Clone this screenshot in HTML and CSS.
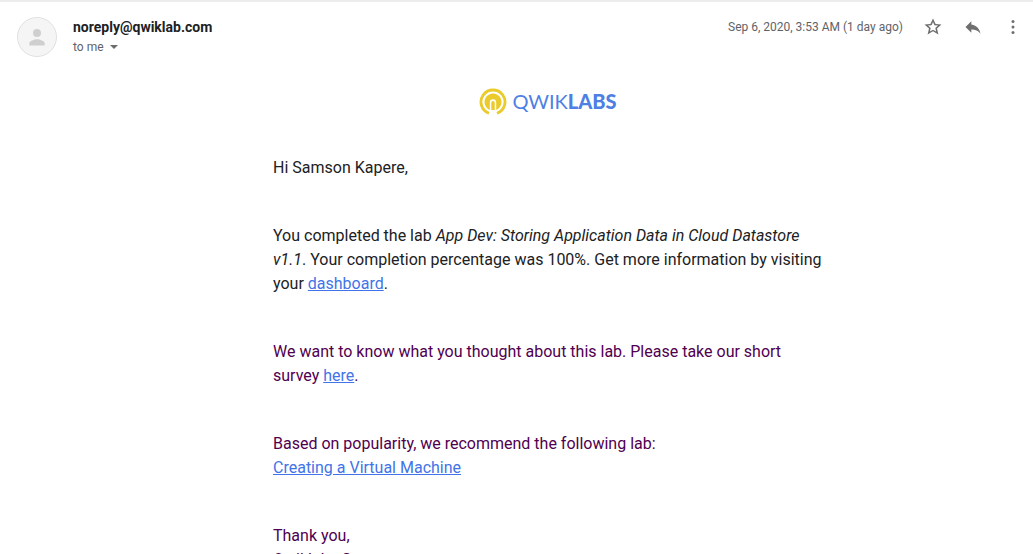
FILE: index.html
```html
<!DOCTYPE html>
<html lang="en">
<head>
<meta charset="utf-8">
<meta name="viewport" content="width=device-width, initial-scale=1">
<title>Lab completed</title>
<link rel="stylesheet" href="styles.css">
</head>
<body>
<article class="message">
  <header class="message-header">
    <svg class="avatar" viewBox="0 0 40 40" aria-hidden="true">
      <circle cx="20" cy="20" r="19.5" fill="#f5f5f5" stroke="#e0e0e0"/>
      <circle cx="20" cy="16" r="4" fill="#cfcfcf"/>
      <path d="M12.3 28.5v-2c0-2.700 5-4.300 7.700-4.300s7.700 1.600 7.700 4.300v2z" fill="#cfcfcf"/>
    </svg>
    <div class="sender">
      <h1 class="sender-name">noreply@qwiklab.com</h1>
      <button class="recipient" type="button">to me
        <svg class="caret" viewBox="0 0 8 4" aria-hidden="true"><path d="M0 0h8L4 4z" fill="#6b6b6b"/></svg>
      </button>
    </div>
    <div class="actions">
      <time class="date" datetime="2020-09-06T03:53">Sep 6, 2020, 3:53 AM (1 day ago)</time>
      <button class="icon-button" type="button" aria-label="Star">
        <svg viewBox="0 0 20 20"><path d="M18.500 7.600l-5.900-.5L10 1.500 7.400 7.100l-5.900.5 4.500 3.900L4.600 17.500 10 14.300l5.400 3.200-1.400-6zM10 12.700l-3.100 1.900.8-3.600-2.700-2.400 3.600-.3L10 5l1.400 3.300 3.600.3-2.700 2.400.8 3.600z"/></svg>
      </button>
      <button class="icon-button" type="button" aria-label="Reply">
        <svg viewBox="0 0 24 24"><path d="M10 9V5l-7 7 7 7v-4.100c5 0 8.500 1.600 11 5.100-1-5-4-10-11-11z"/></svg>
      </button>
      <button class="icon-button" type="button" aria-label="More">
        <svg viewBox="0 0 20 20"><circle cx="10" cy="4.500" r="1.500"/><circle cx="10" cy="10" r="1.500"/><circle cx="10" cy="15.500" r="1.500"/></svg>
      </button>
    </div>
  </header>
  <div class="message-content">
    <div class="message-body">
      <div class="logo">
        <svg class="logo-mark" viewBox="0 0 28 28" aria-hidden="true">
          <path d="M10 25.300A12 12 0 1 1 18 25.300" fill="none" stroke="#eacb2b" stroke-width="2.800"/>
          <path d="M10.800 21.900A8.500 8.500 0 1 1 17.200 21.900V14.500a3.200 3.200 0 0 0-6.400 0z" fill="#eacb2b"/>
          <path d="M12.300 22V14.700a1.700 1.700 0 0 1 3.400 0V22z" fill="#eacb2b"/>
        </svg>
        <span class="logo-text">QWIK<b>LABS</b></span>
      </div>
      <p>Hi Samson Kapere,</p>
      <p>You completed the lab <em>App Dev: Storing Application Data in Cloud Datastore v1.1</em>. Your completion percentage was 100%. Get more information by visiting your <a href="#dashboard">dashboard</a>.</p>
      <p class="quoted">We want to know what you thought about this lab. Please take our short survey <a href="#survey">here</a>.</p>
      <p class="quoted">Based on popularity, we recommend the following lab:<br><a href="#lab">Creating a Virtual Machine</a></p>
      <p class="quoted">Thank you,<br>Qwiklabs Support</p>
    </div>
  </div>
</article>
</body>
</html>
```
FILE: styles.css
```css
* { box-sizing: border-box; }
body {
  margin: 0;
  height: 100vh;
  overflow: hidden;
  background: #fff;
  color: #202124;
  font-family: Roboto, "Liberation Sans", sans-serif;
}
.message { border-top: 2px solid #ececec; }
.message-header {
  display: flex;
  align-items: flex-start;
  padding: 15px 10px 0 17px;
}
.avatar { width: 40px; height: 40px; flex: none; }
.sender { flex: 1; padding-left: 16px; }
.sender-name {
  margin: 0;
  font-size: 14px;
  line-height: 20px;
  font-weight: 700;
}
button {
  padding: 0;
  border: 0;
  background: none;
  font: inherit;
  cursor: pointer;
}
.recipient {
  display: flex;
  align-items: center;
  gap: 6px;
  color: #5f6368;
  font-size: 12px;
  line-height: 20px;
}
.caret { width: 8px; height: 4px; }
.actions { display: flex; align-items: center; gap: 20px; }
.date { color: #5f6368; font-size: 12px; line-height: 20px; }
.icon-button { width: 20px; height: 20px; }
.icon-button svg { display: block; width: 20px; height: 20px; fill: #6f6f6f; }
.message-content { padding: 31px 10px 0 73px; }
.message-body {
  max-width: 550px;
  margin: 0 auto;
  font-size: 16px;
  line-height: 24px;
}
.logo {
  display: flex;
  align-items: flex-start;
  justify-content: center;
  gap: 5px;
  margin-bottom: 40px;
}
.logo-mark { width: 28px; height: 28px; }
.logo-text {
  color: #4d7fe5;
  font-family: Lato, sans-serif;
  font-size: 20px;
  font-weight: 400;
  line-height: 26px;
}
.logo-text b { font-weight: 900; }
p { margin: 0 0 44px; }
.quoted { color: #500050; }
a { color: #4273e8; }
```
